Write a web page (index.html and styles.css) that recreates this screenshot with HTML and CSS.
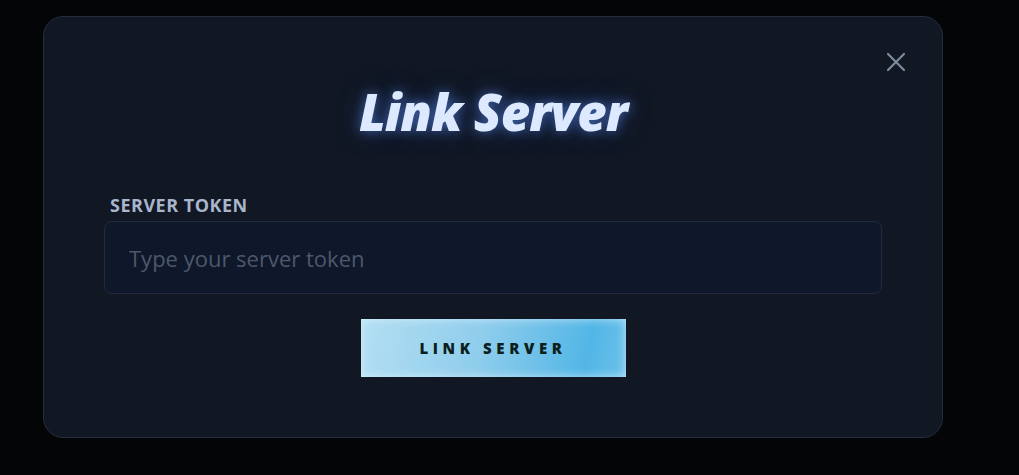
FILE: index.html
```html
<!DOCTYPE html>
<html lang="en">
<head>
  <meta charset="UTF-8" />
  <title>Link Server</title>
  <link rel="stylesheet" href="styles.css">
</head>
<body>

  <!-- Link Server dialog -->
  <div class="modal">
    <button class="close" type="button" aria-label="Close">
      <svg width="20" height="20" viewBox="0 0 20 20">
        <path d="M2 2 L18 18 M18 2 L2 18" stroke="currentColor" stroke-width="2.2" stroke-linecap="round" fill="none"/>
      </svg>
    </button>

    <h1 class="title">Link Server</h1>

    <form class="link-form">
      <label class="field-label" for="token">Server Token</label>
      <input class="field-input" id="token" type="text" placeholder="Type your server token" />
      <button class="submit" type="submit">Link Server</button>
    </form>
  </div>

</body>
</html>
```

FILE: styles.css
```css
body {
  margin: 0;
  background: #040506;
  font-family: 'Open Sans', sans-serif;
  height: 475px;
  overflow: hidden;
}

.modal {
  position: relative;
  box-sizing: border-box;
  width: 900px;
  height: 422px;
  margin: 16px 0 0 43px;
  padding: 60px 60px 0;
  background: #111723;
  border: 1px solid #252e3c;
  border-radius: 20px;
}

.close {
  position: absolute;
  top: 35px;
  right: 36px;
  padding: 0;
  border: none;
  background: none;
  color: #7d8ba0;
  cursor: pointer;
}

.title {
  margin: 0;
  text-align: center;
  font-size: 51px;
  font-weight: 800;
  font-style: italic;
  letter-spacing: -1px;
  line-height: 68px;
  color: #dce9ff;
  text-shadow: 0 0 12px rgba(96, 150, 255, 0.55), 0 0 26px rgba(60, 110, 220, 0.35);
}

.link-form {
  display: flex;
  flex-direction: column;
  align-items: center;
  margin-top: 49px;
}

.field-label {
  align-self: stretch;
  padding-left: 6px;
  font-size: 18px;
  font-weight: 700;
  letter-spacing: 0.5px;
  text-transform: uppercase;
  color: #a8b6cc;
  line-height: 22px;
}

.field-input {
  box-sizing: border-box;
  width: 100%;
  height: 73px;
  margin-top: 5px;
  padding: 0 24px;
  background: #0f172a;
  border: 1px solid #222c3e;
  border-radius: 8px;
  font-family: 'Open Sans', sans-serif;
  font-size: 22px;
  color: #cbd5e1;
  outline: none;
}

.field-input::placeholder {
  color: #4c586b;
}

.submit {
  width: 265px;
  height: 58px;
  margin-top: 25px;
  border: none;
  background: linear-gradient(100deg, #b3dff2 0%, #8fcdec 45%, #52b6e6 85%, #6cc1ea 100%);
  box-shadow: inset 0 0 10px rgba(230, 245, 255, 0.7);
  font-family: 'Open Sans', sans-serif;
  font-size: 15px;
  font-weight: 800;
  letter-spacing: 4.6px;
  text-transform: uppercase;
  color: #0b1f1c;
  cursor: pointer;
}
```
